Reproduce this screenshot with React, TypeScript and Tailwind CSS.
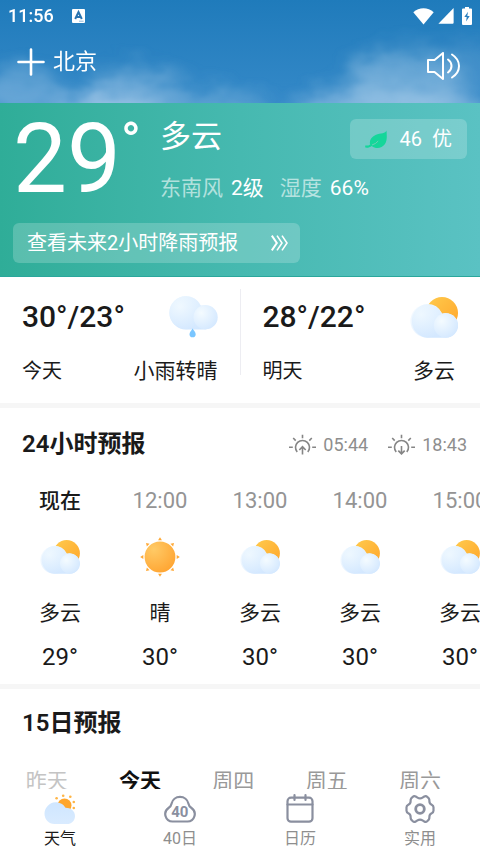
import type { ReactNode } from 'react';

type Sky = 'cloudy' | 'sunny';

const HOURS: { time: string; sky: Sky; label: string; temp: string }[] = [
  { time: '现在', sky: 'cloudy', label: '多云', temp: '29°' },
  { time: '12:00', sky: 'sunny', label: '晴', temp: '30°' },
  { time: '13:00', sky: 'cloudy', label: '多云', temp: '30°' },
  { time: '14:00', sky: 'cloudy', label: '多云', temp: '30°' },
  { time: '15:00', sky: 'cloudy', label: '多云', temp: '30°' },
];

const DAYS = [
  { label: '昨天', className: 'text-[#c4c4c4]' },
  { label: '今天', className: 'font-bold text-[#111111]' },
  { label: '周四', className: 'text-[#999999]' },
  { label: '周五', className: 'text-[#999999]' },
  { label: '周六', className: 'text-[#999999]' },
];

function Gradients() {
  return (
    <svg className="absolute h-0 w-0" aria-hidden="true">
      <defs>
        <linearGradient id="sunFill" x1="0" y1="0" x2="1" y2="1">
          <stop offset="0" stopColor="#ffcb4d" />
          <stop offset="1" stopColor="#ffa52b" />
        </linearGradient>
        <radialGradient id="sunBall" cx="0.3" cy="0.25" r="0.9">
          <stop offset="0" stopColor="#ffca66" />
          <stop offset="1" stopColor="#ffa22e" />
        </radialGradient>
        <linearGradient id="cloudBase" x1="0" y1="0" x2="0" y2="1">
          <stop offset="0" stopColor="#ecf7ff" />
          <stop offset="1" stopColor="#d2e7ff" />
        </linearGradient>
        <radialGradient id="puff" cx="0.32" cy="0.32" r="0.8">
          <stop offset="0" stopColor="#f4fbff" />
          <stop offset="1" stopColor="#d2e7ff" />
        </radialGradient>
        <linearGradient id="navCloud" x1="0" y1="0" x2="0" y2="1">
          <stop offset="0" stopColor="#cfe6ff" />
          <stop offset="1" stopColor="#d9ebff" />
        </linearGradient>
      </defs>
    </svg>
  );
}

function CloudyIcon({ className }: { className: string }) {
  return (
    <svg viewBox="0 0 48 41" className={className} aria-hidden="true">
      <circle cx="32" cy="16" r="16" fill="url(#sunFill)" />
      <path d="M17 7a17 17 0 0 1 15.2 9.4A12.4 12.4 0 1 1 36 40.8H17A17 17 0 0 1 17 7z" fill="url(#cloudBase)" />
      <circle cx="17" cy="24" r="16.6" fill="url(#puff)" opacity="0.6" />
      <circle cx="36" cy="28.4" r="12.2" fill="url(#puff)" />
    </svg>
  );
}

function DrizzleIcon() {
  return (
    <svg viewBox="0 0 49 42" className="h-[42px] w-[49px]" aria-hidden="true">
      <path d="M17 0a17 17 0 0 1 14.6 9.4A12.2 12.2 0 1 1 36.5 33.4H17A16.7 16.7 0 0 1 17 0z" fill="url(#cloudBase)" />
      <circle cx="17" cy="16.7" r="16.5" fill="url(#puff)" opacity="0.7" />
      <circle cx="36.6" cy="21.2" r="12.1" fill="url(#puff)" />
      <path d="M23.6 32.4c1 2 3.1 3.7 3.1 5.8a3.1 3.1 0 0 1-6.2 0c0-2.1 2.1-3.8 3.1-5.8z" fill="#7ac6ff" />
    </svg>
  );
}

function SunnyIcon() {
  return (
    <svg viewBox="-20 -20 40 40" className="h-10 w-10" aria-hidden="true">
      <circle r="15.4" fill="url(#sunBall)" />
      {[0, 45, 90, 135, 180, 225, 270, 315].map((deg) => (
        <path key={deg} d="M0-19.8l1.9 3.1h-3.8z" transform={`rotate(${deg})`} fill="#ffa834" />
      ))}
    </svg>
  );
}

function SunTimeIcon({ up }: { up: boolean }) {
  return (
    <svg viewBox="0 0 27 21" className="h-[21px] w-[27px]" fill="none" stroke="#858585" strokeWidth="1.6" aria-hidden="true">
      <path d="M8.2 18a7 7 0 1 1 10.6 0M0 13.3h3.8M23.2 13.3H27M13.5.8v3.4M4.2 4l2.5 2.6M22.8 4l-2.5 2.6" />
      <path d={up ? 'M13.5 20.5v-7.8M10.3 16l3.2-3.3 3.2 3.3' : 'M13.5 12v7.8M10.3 16.6l3.2 3.3 3.2-3.3'} />
    </svg>
  );
}

function CloudBackdrop() {
  return (
    <svg className="absolute inset-0 h-full w-full" viewBox="0 0 480 103" preserveAspectRatio="none" aria-hidden="true">
      <defs>
        <filter id="haze" x="-20%" y="-50%" width="140%" height="200%">
          <feTurbulence type="fractalNoise" baseFrequency="0.03 0.05" numOctaves="3" seed="11" result="noise" />
          <feGaussianBlur in="SourceGraphic" stdDeviation="10" result="soft" />
          <feDisplacementMap in="soft" in2="noise" scale="24" xChannelSelector="R" yChannelSelector="G" result="torn" />
          <feGaussianBlur in="torn" stdDeviation="1.5" />
        </filter>
      </defs>
      <g filter="url(#haze)" fill="#b5d3ec">
        <ellipse cx="20" cy="94" rx="38" ry="26" opacity="0.38" />
        <ellipse cx="135" cy="96" rx="56" ry="26" opacity="0.4" />
        <ellipse cx="105" cy="112" rx="54" ry="18" opacity="0.65" />
        <ellipse cx="225" cy="108" rx="42" ry="14" opacity="0.35" />
        <ellipse cx="405" cy="84" rx="58" ry="34" opacity="0.42" />
        <ellipse cx="390" cy="110" rx="96" ry="22" opacity="0.55" />
        <ellipse cx="470" cy="66" rx="34" ry="26" opacity="0.15" />
      </g>
    </svg>
  );
}

function StatusBar() {
  return (
    <div className="relative flex h-8 items-center px-2 text-white">
      <span className="text-[18px] leading-8 font-medium">11:56</span>
      <svg viewBox="0 0 13 14" className="ml-[18px] h-[14px] w-[13px]" aria-hidden="true">
        <rect width="13" height="14" rx="1" fill="#fff" />
        <path d="M3.2 10L6.5 3l3.3 7M4.5 8h4" fill="none" stroke="#2a74b0" strokeWidth="2" />
        <path d="M7 12.2h4.6" stroke="#8fb9da" />
      </svg>
      <div className="ml-auto flex items-center gap-1">
        <svg viewBox="0 0 21 17" className="h-[17px] w-[21px]" fill="#fff" aria-hidden="true">
          <path d="M10.5 16.6L.3 4.2C6-1 15-1 20.7 4.2z" />
        </svg>
        <svg viewBox="0 0 16 16" className="h-4 w-4" fill="#fff" aria-hidden="true">
          <path d="M15.6 0v14.8q0 1-1 1H.4z" />
        </svg>
        <svg viewBox="0 0 10 18" className="ml-1 h-[18px] w-[10px]" aria-hidden="true">
          <path d="M3 0h4v1.6h2q1 0 1 1V17q0 1-1 1H1q-1 0-1-1V2.6q0-1 1-1h2z" fill="#fff" />
          <path d="M6 4.8L2.3 10h2.4l-.6 4.5L7.700 9H5.300z" fill="#2a7fbf" />
        </svg>
      </div>
    </div>
  );
}

function Header() {
  return (
    <header className="relative h-[103px] overflow-hidden bg-gradient-to-b from-[#1f7bbb] to-[#3489c8]">
      <CloudBackdrop />
      <StatusBar />
      <div className="relative flex items-center justify-between pt-3 pr-5 pl-[17px]">
        <button type="button" className="flex items-center gap-2 text-[22px] leading-9 text-white">
          <svg viewBox="0 0 28 28" className="h-7 w-7" stroke="#fff" strokeWidth="2.6" strokeLinecap="round" aria-hidden="true">
            <path d="M14 1.5v25M1.5 14h25" />
          </svg>
          北京
        </button>
        <button type="button" aria-label="语音播报" className="pt-2">
          <svg viewBox="0 0 33 28" className="h-7 w-[33px]" fill="none" stroke="#fff" strokeWidth="2" aria-hidden="true">
            <path d="M1 8h6.5l8.5-7v26l-8.5-7H1z" strokeLinejoin="round" />
            <path d="M21 7.5q3.5 2.5 3.5 6.5T21 20.5" strokeLinecap="round" />
            <path d="M25 2.5q7 4.500 7 11.500t-7 11.500" strokeLinecap="round" />
          </svg>
        </button>
      </div>
    </header>
  );
}

function Current() {
  return (
    <section className="h-[174px] border-b border-[#2aa79c] bg-gradient-to-r from-[#2fad98] via-[#46b9b0] to-[#5ac2c3] text-white">
      <div className="flex h-[120px] items-start pr-[13px] pl-3">
        <div className="flex w-[148px] items-start pl-px">
          <span className="text-[96px] leading-[112px]">29</span>
          <span className="text-[52px] leading-[78px] font-medium">°</span>
        </div>
        <div className="flex-1">
          <div className="flex items-start justify-between">
            <h1 className="pt-[14px] text-[31px] leading-10">多云</h1>
            <a href="#air" className="mt-4 flex h-10 items-center rounded-md bg-white/20 px-[15px] text-[20px]">
              <svg viewBox="0 0 22 19" className="mr-[13px] h-[19px] w-[22px]" aria-hidden="true">
                <path d="M21.5.5C20.500 4 16 2.500 10.500 5 6 7 4 11 5.200 14.400 3.600 15.600 2 15.800.2 15.500v2c2.300.5 4.600-.2 6.600-1.600 3.700 3.300 10 2.700 13-1.600C22.600 10.400 21.700 5 21.500.5z" fill="#15d69a" />
                <path d="M7 15q4-1.200 6.200-4" fill="none" stroke="#76cdb8" strokeWidth="0.9" />
              </svg>
              <span>46</span>
              <span className="ml-[10px]">优</span>
            </a>
          </div>
          <p className="flex items-center gap-2 pt-[13px] text-[21px] leading-8 whitespace-nowrap">
            <span className="text-white/60">东南风</span>
            <span>2级</span>
            <span className="ml-2 text-white/60">湿度</span>
            <span>66%</span>
          </p>
        </div>
      </div>
      <a href="#rain" className="ml-[13px] flex h-10 w-[287px] items-center justify-between rounded-md bg-white/20 pr-3 pl-[14px] text-[20px]">
        查看未来2小时降雨预报
        <svg viewBox="0 0 17 16" className="h-4 w-[17px]" fill="none" stroke="#fff" strokeWidth="1.6" aria-hidden="true">
          <path d="M.8.6L5.800 8l-5 7.400" strokeWidth="2" />
          <path d="M6 .6L11 8l-5 7.400M11 .6L16 8l-5 7.400" />
        </svg>
      </a>
    </section>
  );
}

function DayCard({ range, day, label, icon }: { range: string; day: string; label: string; icon: ReactNode }) {
  return (
    <div className="flex-1 px-[22px]">
      <div className="flex h-14 items-center justify-between">
        <span className="text-[30px] leading-9 font-medium">{range}</span>
        {icon}
      </div>
      <div className="flex items-center justify-between pt-[10px] leading-8">
        <span className="text-[20px]">{day}</span>
        <span className="min-w-12 text-center text-[21px]">{label}</span>
      </div>
    </div>
  );
}

function Hourly() {
  return (
    <section className="h-[276px] bg-white">
      <div className="flex items-center justify-between pt-[18px] pr-[13px] pl-[22px]">
        <h2 className="text-[24px] leading-9 font-semibold">24小时预报</h2>
        <div className="flex items-center gap-5 text-[18px] text-[#8e8e8e]">
          <span className="flex items-center gap-[7px]">
            <SunTimeIcon up />
            05:44
          </span>
          <span className="flex items-center gap-[7px]">
            <SunTimeIcon up={false} />
            18:43
          </span>
        </div>
      </div>
      <ul className="flex overflow-x-auto pt-[23px] pl-[10px] [scrollbar-width:none]">
        {HOURS.map((hour, idx) => (
          <li key={hour.time} className="flex w-[100px] shrink-0 flex-col items-center leading-8">
            <span className={idx === 0 ? 'text-[21px] font-medium' : 'text-[22px] text-[#949494]'}>{hour.time}</span>
            <span className="flex h-20 items-center">
              {hour.sky === 'sunny' ? <SunnyIcon /> : <CloudyIcon className="h-[34px] w-10" />}
            </span>
            <span className="text-[21px]">{hour.label}</span>
            <span className="pt-3 text-[24px]">{hour.temp}</span>
          </li>
        ))}
      </ul>
    </section>
  );
}

function Daily() {
  return (
    <section className="bg-white">
      <h2 className="pt-4 pl-[22px] text-[24px] leading-9 font-semibold">15日预报</h2>
      <ul className="flex overflow-hidden pt-6 text-[21px] leading-8">
        {DAYS.map((day) => (
          <li key={day.label} className="w-7/36 shrink-0 text-center">
            <span className={day.className}>{day.label}</span>
          </li>
        ))}
      </ul>
    </section>
  );
}

function WeatherTabIcon() {
  return (
    <svg viewBox="0 0 32 32" className="h-8 w-8" aria-hidden="true">
      <circle cx="20.5" cy="12.5" r="7" fill="#ffa62c" />
      <g fill="#ffb545">
        <circle cx="12.6" cy="5.2" r="1.3" />
        <circle cx="19.2" cy="2.8" r="1.3" />
        <circle cx="26.3" cy="3.8" r="1.3" />
        <circle cx="29.8" cy="9" r="1.3" />
        <circle cx="29.8" cy="15" r="1.3" />
      </g>
      <path d="M11.5 9.2c4.500 0 8.200 2.200 10 5.600 5.200 0 9.500 3.300 9.500 8.100 0 4.700-3.500 8.100-8 8.100H10.500C4.800 31 .5 26.600.5 20.800S5.200 9.200 11.500 9.200z" fill="url(#navCloud)" />
    </svg>
  );
}

function FortyIcon() {
  return (
    <svg viewBox="0 0 32 32" className="h-8 w-8" aria-hidden="true">
      <path
        d="M8.5 28.5a7.400 7.400 0 0 1-4-13.500q2.600-1.700 3-4.200a8.700 8.700 0 0 1 17 0q.4 2.500 3 4.200a7.400 7.400 0 0 1-4 13.500z"
        fill="none"
        stroke="#8a8f9f"
        strokeWidth="2.2"
      />
      <text x="15.8" y="24" textAnchor="middle" fontSize="15" fontWeight="700" fill="#8a8f9f">40</text>
    </svg>
  );
}

function CalendarIcon() {
  return (
    <svg viewBox="0 0 32 32" className="h-8 w-8" fill="none" stroke="#8a8f9f" strokeWidth="2.2" strokeLinecap="round" aria-hidden="true">
      <rect x="3.5" y="4.7" width="25" height="24" rx="3.5" />
      <path d="M3.5 11.5h25M10.5 2v5M21.5 2v5" />
    </svg>
  );
}

function GearIcon() {
  return (
    <svg viewBox="0 0 32 32" className="h-8 w-8" fill="none" stroke="#8a8f9f" strokeWidth="2.2" strokeLinejoin="round" aria-hidden="true">
      <path d="M13.500 4.600Q16 6.200 18.500 4.600L20.300 3.500Q22 2.600 23.400 4L24.900 5.600Q25.500 6.600 25.400 8.200 25.400 10.800 27.700 11.700 29.500 12.600 29.500 14.200V17.800Q29.500 19.400 27.700 20.300 25.400 21.200 25.400 23.800 25.500 25.400 24.900 26.400L23.400 28Q22 29.400 20.300 28.500L18.500 27.400Q16 25.800 13.500 27.400L11.700 28.500Q10 29.400 8.600 28L7.100 26.400Q6.500 25.400 6.600 23.800 6.600 21.200 4.300 20.300 2.500 19.400 2.500 17.800V14.200Q2.500 12.600 4.300 11.700 6.600 10.800 6.600 8.200 6.500 6.600 7.100 5.600L8.600 4Q10 2.600 11.700 3.500z" />
      <circle cx="16" cy="16" r="4.3" strokeWidth="2.8" />
    </svg>
  );
}

const TABS = [
  { label: '天气', icon: <WeatherTabIcon />, active: true },
  { label: '40日', icon: <FortyIcon />, active: false },
  { label: '日历', icon: <CalendarIcon />, active: false },
  { label: '实用', icon: <GearIcon />, active: false },
];

export default function App() {
  return (
    <div className="flex h-dvh flex-col bg-white font-['Roboto','Noto_Sans_CJK_SC',sans-serif] text-[#1a1a1a]" lang="zh-CN">
      <Gradients />
      <main className="min-h-0 flex-1 overflow-x-hidden overflow-y-auto [scrollbar-width:none]">
        <Header />
        <Current />

        {/* Today / tomorrow */}
        <section className="flex h-[126px] bg-white pt-3">
          <DayCard range="30°/23°" day="今天" label="小雨转晴" icon={<DrizzleIcon />} />
          <div className="h-[86px] w-px bg-[#ededf2]" />
          <DayCard range="28°/22°" day="明天" label="多云" icon={<CloudyIcon className="h-[41px] w-12" />} />
        </section>

        <div className="h-[5px] bg-[#f6f6f6]" />
        <Hourly />
        <div className="h-[5px] bg-[#f6f6f6]" />
        <Daily />
      </main>

      <nav className="grid h-16 shrink-0 grid-cols-4 bg-white">
        {TABS.map((tab) => (
          <a key={tab.label} href="#tab" className="flex flex-col items-center pt-1">
            {tab.icon}
            <span className={tab.active ? 'text-[16px] leading-7 text-[#1a1a1a]' : 'text-[16px] leading-7 text-[#8e8e8e]'}>{tab.label}</span>
          </a>
        ))}
      </nav>
    </div>
  );
}
